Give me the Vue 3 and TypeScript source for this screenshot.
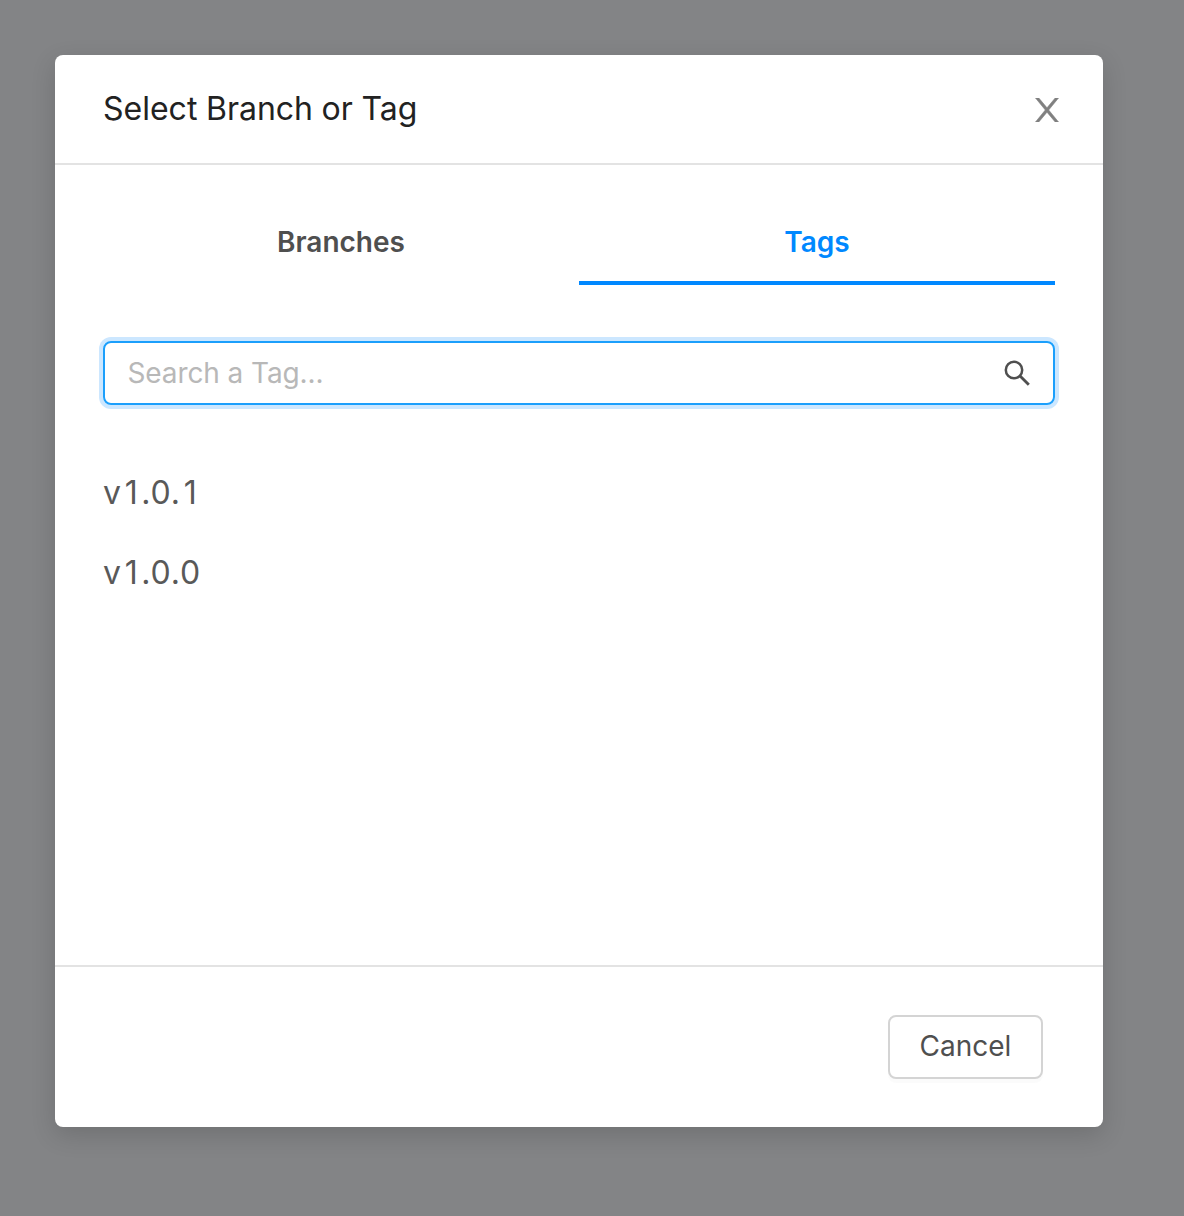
<script setup lang="ts">
import { ref } from 'vue'

const tabs: string[] = ['Branches', 'Tags']
const active = ref<string>('Tags')
const query = ref<string>('')
const tags: string[] = ['v1.0.1', 'v1.0.0']

const isDigit = (ch: string): boolean => ch >= '0' && ch <= '9'
</script>

<template>
  <div class="mask">
    <section class="modal" role="dialog">
      <header class="header">
        <h1 class="title">Select Branch or Tag</h1>
        <button class="close" aria-label="Close">
          <svg width="24" height="24" viewBox="0 0 24 24">
            <path d="M0.5 0H3.8L12 9.8L20.2 0H23.5L13.7 12L23.5 24H20.2L12 14.2L3.8 24H0.5L10.3 12Z" fill="#808080" stroke="#808080" stroke-width="0.6" />
          </svg>
        </button>
      </header>

      <main class="body">
        <nav class="tabs">
          <button
            v-for="tab in tabs"
            :key="tab"
            class="tab"
            :class="{ active: tab === active }"
            @click="active = tab"
          >{{ tab }}</button>
        </nav>
        <div class="search">
          <input v-model="query" class="input" placeholder="Search a Tag..." />
          <svg class="glass" width="28" height="28" viewBox="0 0 28 28" fill="none" stroke="#4f4f4f">
            <circle cx="11" cy="11" r="8.2" stroke-width="2.5" />
            <path d="M16.8 16.8L25.8 25.8" stroke-width="2.8" />
          </svg>
        </div>
        <ul class="list">
          <li v-for="tag in tags" :key="tag" class="item"><span v-for="(ch, i) in tag" :key="i" :class="{ digit: isDigit(ch) }">{{ ch }}</span></li>
        </ul>
      </main>

      <footer class="footer">
        <button class="cancel">Cancel</button>
      </footer>
    </section>
  </div>
</template>

<style>
body {
  background: #838486;
}
</style>

<style scoped>
.mask {
  box-sizing: border-box;
  height: 1216px;
  padding: 55px 81px 89px 55px;
  background: #838486;
  font-family: Inter, "Liberation Sans", sans-serif;
  overflow: hidden;
}
.modal {
  box-sizing: border-box;
  display: flex;
  flex-direction: column;
  height: 1072px;
  border-radius: 8px;
  background: #fff;
  box-shadow: 0 8px 24px rgba(0, 0, 0, 0.15);
}
button {
  margin: 0;
  padding: 0;
  border: 0;
  background: none;
  font-family: inherit;
}
.header {
  box-sizing: border-box;
  display: flex;
  align-items: center;
  justify-content: space-between;
  height: 110px;
  padding: 0 44px 0 48px;
  border-bottom: 2px solid #e3e3e3;
}
.title {
  margin: 0;
  font-size: 32px;
  font-weight: 400;
  font-variant-numeric: tabular-nums;
  line-height: 44px;
  color: #222;
}
.close {
  display: flex;
  margin-top: 2px;
}
.body {
  flex: 1;
  padding: 32px 48px 0;
}
.tabs {
  display: flex;
  height: 88px;
}
.tab {
  box-sizing: border-box;
  flex: 1;
  padding-top: 6px;
  border-bottom: 4px solid transparent;
  font-size: 28px;
  font-weight: 600;
  line-height: 78px;
  color: #4f4f4f;
}
.tab.active {
  color: #0088ff;
  border-bottom-color: #0088ff;
}
.search {
  box-sizing: border-box;
  display: flex;
  align-items: center;
  height: 64px;
  margin-top: 56px;
  padding: 0 22px;
  border: 2px solid #1b9ffc;
  border-radius: 8px;
  box-shadow: 0 0 0 4px #cce7ff;
}
.input {
  flex: 1;
  padding: 0 0 0 0.5px;
  border: 0;
  outline: none;
  background: none;
  font-family: inherit;
  font-size: 28px;
  letter-spacing: -0.1px;
  color: #4f4f4f;
}
.input::placeholder {
  color: #b8b8b8;
  opacity: 1;
}
.list {
  margin: 48px 0 0;
  padding: 0;
  list-style: none;
}
.item {
  height: 80px;
  font-size: 32px;
  line-height: 80px;
  color: #595959;
}
.digit {
  display: inline-block;
  width: 20.3px;
  text-align: center;
}
.footer {
  box-sizing: border-box;
  display: flex;
  align-items: flex-start;
  justify-content: flex-end;
  height: 162px;
  padding: 48px 60px 0;
  border-top: 2px solid #e3e3e3;
}
.cancel {
  box-sizing: border-box;
  width: 155px;
  height: 64px;
  padding-bottom: 2px;
  border: 2px solid #d4d4d4;
  border-radius: 8px;
  background: #fff;
  box-shadow: 0 4px 0 rgba(0, 0, 0, 0.016);
  font-size: 28px;
  line-height: 58px;
  color: #4f4f4f;
}
</style>
